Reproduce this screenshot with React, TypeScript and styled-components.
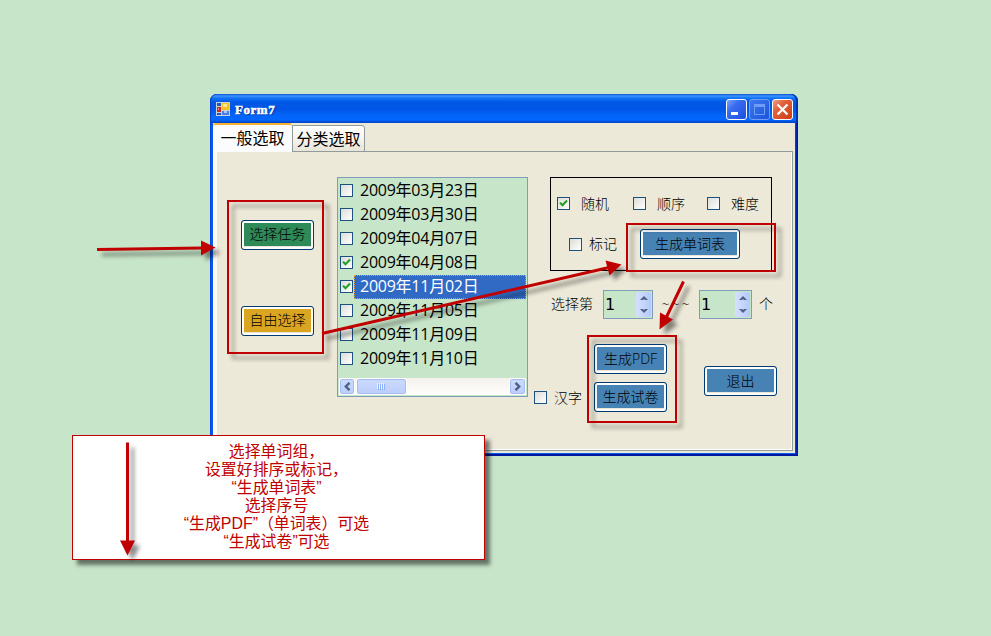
import React from "react";
import styled, { createGlobalStyle, css } from "styled-components";

const UI_FONT = `"Open Sans", "Noto Sans CJK SC", sans-serif`;
const RED = "#c00000";
const MINT = "#c7e5c9";
const FACE = "#ece9d8";

const GlobalStyle = createGlobalStyle`
  * { box-sizing: border-box; }
  body { margin: 0; background: ${MINT}; font-family: ${UI_FONT}; }
  button { font-family: inherit; }
`;

const Desktop = styled.main`
  position: relative;
  width: 991px;
  height: 636px;
  padding: 94px 0 0 210px;
  overflow: hidden;
  background: ${MINT};
`;

const WindowFrame = styled.section`
  display: flex;
  flex-direction: column;
  width: 588px;
  height: 362px;
  padding: 0 3px 3px;
  border-radius: 7px 7px 0 0;
  background: linear-gradient(90deg, #0a3fd8 0, #0a5cf0 2px, #0a5cf0 585px, #0026b8 586px, #00139a 588px);
  box-shadow: inset 0 -2px 0 #0018a0;
`;

const TitleBar = styled.header`
  display: flex;
  align-items: center;
  flex: none;
  height: 29px;
  margin: 0 -3px;
  padding: 2px 5px 0 6px;
  border-radius: 7px 7px 0 0;
  background: linear-gradient(180deg, #0a4fd0 0, #3d95ff 2px, #1474f5 4px, #0058e6 8px, #0055e5 15px, #0366fb 22px, #0366fd 26px, #0040c0 29px);
  box-shadow: inset 1px 0 0 #0840c8, inset -2px 0 0 #0030b8;
`;

const Title = styled.h1`
  flex: 1;
  margin: 0 0 0 5px;
  color: #fff;
  font: bold 13px/16px "Liberation Serif", serif;
  letter-spacing: 0.55px;
  -webkit-text-stroke: 0.5px #fff;
  text-shadow: 1px 1px 1px #062a80;
`;

const CaptionButtons = styled.div`
  display: flex;
  gap: 2px;
`;

const captionFill = {
  normal: "linear-gradient(135deg, #7aa2fa 0, #3a6cf0 35%, #1c4fe0 100%)",
  disabled: "linear-gradient(135deg, #3f78ee, #1c54d8)",
  close: "linear-gradient(135deg, #f0a088 0, #e2603c 35%, #cc3c10 100%)",
};

const CaptionButton = styled.button<{ $kind: keyof typeof captionFill }>`
  display: grid;
  place-items: center;
  width: 21px;
  height: 21px;
  padding: 0;
  border: 1px solid ${(p) => (p.$kind === "disabled" ? "#6f9cf6" : "#fff")};
  border-radius: 3px;
  background: ${(p) => captionFill[p.$kind]};
`;

const Client = styled.div`
  display: flex;
  flex-direction: column;
  flex: 1;
  padding: 0 2px 2px 0;
  background: ${FACE};
`;

const TabStrip = styled.nav`
  display: flex;
  align-items: flex-end;
  height: 29px;
  flex: none;
  box-shadow: inset 0 -1px 0 #919b9c;
`;

const Tab = styled.button<{ $active?: boolean }>`
  padding: 0;
  color: #000;
  font-size: 16px;
  font-weight: 400;
  white-space: nowrap;
  ${(p) =>
    p.$active
      ? css`
          width: 79px;
          height: 29px;
          padding-bottom: 2px;
          line-height: 24px;
          border: 0;
          border-top: 2px solid #f5b133;
          border-radius: 3px 3px 0 0;
          background: #fcfcfe;
        `
      : css`
          width: 73px;
          height: 27px;
          line-height: 24px;
          border: 1px solid #919b9c;
          border-radius: 0 3px 0 0;
          background: linear-gradient(#fff, #f3f2ea 60%, #e8e5d8);
        `}
`;

const TabPage = styled.div`
  display: grid;
  grid-template-columns: 120px 191px 1fr;
  flex: 1;
  border-left: 4px solid #fbfaf5;
  border-right: 1px solid #919b9c;
  border-bottom: 1px solid #919b9c;
  box-shadow: inset -1px -1px 0 #fff;
`;

const TaskColumn = styled.div`
  display: flex;
  flex-direction: column;
  gap: 56px;
  padding: 68px 0 0 24px;
`;

const PushButton = styled.button<{ $fill?: string; $wide?: boolean; $raised?: boolean }>`
  flex: none;
  width: ${(p) => (p.$wide ? 100 : 73)}px;
  height: 30px;
  padding: 0 0 ${(p) => (p.$raised ? 3 : 0)}px;
  color: #000;
  font-size: 14px;
  font-weight: 300;
  line-height: 22px;
  white-space: nowrap;
  border: 1px solid #003c74;
  border-radius: 3px;
  background: ${(p) => p.$fill ?? "#4682b4"};
  box-shadow: inset 0 0 0 2px #fff, inset 0 -3px 0 #e8e4d8;
`;

const ListBox = styled.div`
  display: flex;
  flex-direction: column;
  height: 220px;
  margin-top: 25px;
  padding: 1px;
  border: 1px solid #7f9db9;
  background: ${MINT};
`;

const ListRow = styled.label`
  display: flex;
  align-items: flex-start;
  height: 24px;
  padding-left: 1px;
`;

const RowCheck = styled.span`
  display: flex;
  padding-top: 5px;
`;

const RowText = styled.span<{ $selected: boolean }>`
  flex: 1;
  height: 24px;
  margin-left: 1px;
  padding-left: 5px;
  font-size: 16px;
  line-height: 20px;
  letter-spacing: -0.25px;
  border: 1px ${(p) => (p.$selected ? "dotted #e0a030" : "solid transparent")};
  color: ${(p) => (p.$selected ? "#fff" : "#000")};
  background: ${(p) => (p.$selected ? "#316ac5" : "transparent")};
`;

const Box = styled.span`
  display: grid;
  place-items: center;
  flex: none;
  width: 13px;
  height: 13px;
  border: 1px solid #1c5180;
  background: linear-gradient(135deg, #dcdcd7, #fff);
`;

const ScrollBar = styled.div`
  display: flex;
  gap: 1px;
  height: 17px;
  margin-top: auto;
  background: linear-gradient(#f3f1ec, #fefefb);
`;

const ScrollPiece = styled.div<{ $w: number; $end?: boolean }>`
  display: grid;
  place-items: center;
  width: ${(p) => p.$w}px;
  height: 17px;
  margin-left: ${(p) => (p.$end ? "auto" : 0)};
  border: 1px solid #fff;
  border-radius: 3px;
  background: linear-gradient(#cbdafe, #bccdf9);
  box-shadow: inset 0 0 0 1px #a6bcf0;
`;

const Options = styled.div`
  display: flex;
  flex-direction: column;
`;

const GroupBox = styled.div`
  display: flex;
  flex-direction: column;
  width: 222px;
  height: 94px;
  margin: 25px 0 0 22px;
  border: 1px solid #000;
`;

const FirstOptions = styled.div`
  display: grid;
  grid-template-columns: 76px 74px 60px;
  align-items: center;
  height: 51px;
  padding-left: 6px;
`;

const SecondOptions = styled.div`
  display: flex;
  align-items: center;
  gap: 23px;
  height: 30px;
  padding-left: 18px;
`;

const CheckLabel = styled.label<{ $gap: number }>`
  display: flex;
  align-items: center;
  gap: ${(p) => p.$gap}px;
  height: 19px;
  font-size: 14px;
  font-weight: 300;
  line-height: 18px;
  white-space: nowrap;
`;

const RangeRow = styled.div`
  display: flex;
  align-items: center;
  height: 29px;
  margin: 19px 0 0 23px;
  font-size: 14px;
  font-weight: 300;
`;

const Caption = styled.span<{ $w: number; $center?: boolean }>`
  width: ${(p) => p.$w}px;
  padding-bottom: 3px;
  text-align: ${(p) => (p.$center ? "center" : "left")};
  white-space: nowrap;
`;

const Tildes = styled(Caption)`
  padding: 0 0 2px 1px;
  letter-spacing: 2px;
`;

const Spin = styled.div<{ $w: number }>`
  display: flex;
  justify-content: space-between;
  width: ${(p) => p.$w}px;
  height: 29px;
  padding: 1px 1px 1px 1px;
  border: 1px solid #7f9db9;
  background: ${MINT};
  font: 16px/25px "DejaVu Sans", sans-serif;
`;

const SpinArrows = styled.div`
  display: grid;
  grid-template-rows: 1fr 1fr;
  place-items: center;
  width: 15px;
  border-radius: 2px;
  background: linear-gradient(90deg, #d5e0ff, #b5c9f8);
`;

const Actions = styled.div`
  display: flex;
  align-items: flex-start;
  margin: 25px 0 0 6px;
`;

const HanziSlot = styled.div`
  width: 60px;
  padding-top: 44px;
`;

const ExportStack = styled.div`
  display: flex;
  flex-direction: column;
  gap: 8px;
`;

const ExitSlot = styled.div`
  margin: 22px 0 0 37px;
`;

const Note = styled.aside`
  position: absolute;
  left: 72px;
  top: 435px;
  width: 413px;
  height: 125px;
  padding: 7px 4px 0 0;
  border: 1px solid ${RED};
  background: #fff;
  color: ${RED};
  font: 400 16px/18px "Liberation Sans", "Noto Sans CJK SC", sans-serif;
  font-kerning: none;
  text-spacing-trim: space-all;
  text-align: center;
  box-shadow: 5px 5px 4px rgba(0, 0, 0, 0.5);
`;

const NoteLine = styled.p`
  height: 18px;
  margin: 0;
  font-size: 15.9px;
  white-space: nowrap;
`;

const Highlight = styled.div<{ $x: number; $y: number; $w: number; $h: number }>`
  position: absolute;
  left: ${(p) => p.$x}px;
  top: ${(p) => p.$y}px;
  width: ${(p) => p.$w}px;
  height: ${(p) => p.$h}px;
  border: 2px solid ${RED};
  filter: drop-shadow(5px 5px 2px rgba(0, 0, 0, 0.4));
  pointer-events: none;
`;

const ArrowLayer = styled.svg`
  position: absolute;
  inset: 0;
  pointer-events: none;
  filter: drop-shadow(5px 5px 2px rgba(0, 0, 0, 0.45));
`;

function Check({ on = false }: { on?: boolean }) {
  return (
    <Box>
      {on && (
        <svg width="9" height="9" viewBox="0 0 9 9">
          <path d="M1 3.6 3.5 6.3 8 1.6" fill="none" stroke="#21a121" strokeWidth="2.1" />
        </svg>
      )}
    </Box>
  );
}

function Chevron({ d }: { d: string }) {
  return (
    <svg width="9" height="9" viewBox="0 0 9 9">
      <path d={d} fill="none" stroke="#4d6185" strokeWidth="2.4" />
    </svg>
  );
}

function NumberField({ width }: { width: number }) {
  return (
    <Spin $w={width}>
      1
      <SpinArrows>
        <svg width="8" height="6" viewBox="0 0 8 6"><path d="M0 5 4 1l4 4H5L4 4 3 5Z" fill="#4d6185" /></svg>
        <svg width="8" height="6" viewBox="0 0 8 6"><path d="M0 1 4 5l4-4H5L4 2 3 1Z" fill="#4d6185" /></svg>
      </SpinArrows>
    </Spin>
  );
}

function FormIcon() {
  return (
    <svg width="14" height="15" viewBox="0 0 14 15">
      <path d="M0 0h14v14H0z" fill="#c9d0dc" />
      <path d="M1 1h4v3H1z" fill="#2458b8" />
      <path d="M6 1h7v7H6z" fill="#f6c024" />
      <path d="M7 2h4v3H7z" fill="#ffe890" />
      <path d="M1 5h4v5H1z" fill="#c8281c" />
      <path d="M2 6h1v2H2z" fill="#f0988c" />
      <path d="M1 11h4v2H1z" fill="#2458b8" />
      <path d="M6 9h7v4H6z" fill="#4c7de0" />
      <path d="M8 9h3v2H8z" fill="#a9c6fa" />
    </svg>
  );
}

const dates = [
  ["2009年03月23日", false],
  ["2009年03月30日", false],
  ["2009年04月07日", false],
  ["2009年04月08日", true],
  ["2009年11月02日", true],
  ["2009年11月05日", false],
  ["2009年11月09日", false],
  ["2009年11月10日", false],
] as const;

const noteLines = [
  "选择单词组，",
  "设置好排序或标记，",
  "“生成单词表”",
  "选择序号",
  "“生成PDF”（单词表）可选",
  "“生成试卷”可选",
];

export default function App() {
  return (
    <>
      <GlobalStyle />
      <Desktop>
        <WindowFrame>
          <TitleBar>
            <FormIcon />
            <Title>Form7</Title>
            <CaptionButtons>
              <CaptionButton $kind="normal" aria-label="minimize">
                <svg width="19" height="19"><path d="M4 12h7v3H4z" fill="#fff" /></svg>
              </CaptionButton>
              <CaptionButton $kind="disabled" aria-label="maximize">
                <svg width="19" height="19">
                  <path d="M4.5 5v9.5h10V5" fill="none" stroke="#6f9cf6" />
                  <path d="M4 4h11v3H4z" fill="#6f9cf6" />
                </svg>
              </CaptionButton>
              <CaptionButton $kind="close" aria-label="close">
                <svg width="19" height="19"><path d="m4.5 4.5 10 10m0-10-10 10" stroke="#fff" strokeWidth="2.2" /></svg>
              </CaptionButton>
            </CaptionButtons>
          </TitleBar>
          <Client>
            <TabStrip>
              <Tab $active>一般选取</Tab>
              <Tab>分类选取</Tab>
            </TabStrip>
            <TabPage>
              <TaskColumn>
                <PushButton $raised $fill="#2e8b57">选择任务</PushButton>
                <PushButton $raised $fill="#daa520">自由选择</PushButton>
              </TaskColumn>
              <ListBox>
                {dates.map(([date, checked], i) => (
                  <ListRow key={date}>
                    <RowCheck><Check on={checked} /></RowCheck>
                    <RowText $selected={i === 4}>{date}</RowText>
                  </ListRow>
                ))}
                <ScrollBar>
                  <ScrollPiece $w={16}><Chevron d="M6.5 0.8 2.8 4.5l3.7 3.7" /></ScrollPiece>
                  <ScrollPiece $w={51}>
                    <svg width="9" height="7">
                      <path d="M.5 0v6m2-6v6m2-6v6m2-6v6" stroke="#eef4fe" />
                      <path d="M1.5 1v6m2-6v6m2-6v6m2-6v6" stroke="#8cb0f8" />
                    </svg>
                  </ScrollPiece>
                  <ScrollPiece $w={17} $end><Chevron d="M2.5 0.8 6.2 4.5 2.5 8.2" /></ScrollPiece>
                </ScrollBar>
              </ListBox>
              <Options>
                <GroupBox>
                  <FirstOptions>
                    <CheckLabel $gap={11}><Check on />随机</CheckLabel>
                    <CheckLabel $gap={11}><Check />顺序</CheckLabel>
                    <CheckLabel $gap={11}><Check />难度</CheckLabel>
                  </FirstOptions>
                  <SecondOptions>
                    <CheckLabel $gap={7}><Check />标记</CheckLabel>
                    <PushButton $wide>生成单词表</PushButton>
                  </SecondOptions>
                </GroupBox>
                <RangeRow>
                  <Caption $w={52}>选择第</Caption>
                  <NumberField width={50} />
                  <Tildes $w={46} $center>~~~</Tildes>
                  <NumberField width={53} />
                  <Caption $w={28} $center>个</Caption>
                </RangeRow>
                <Actions>
                  <HanziSlot>
                    <CheckLabel $gap={7}><Check />汉字</CheckLabel>
                  </HanziSlot>
                  <ExportStack>
                    <PushButton>生成PDF</PushButton>
                    <PushButton>生成试卷</PushButton>
                  </ExportStack>
                  <ExitSlot>
                    <PushButton>退出</PushButton>
                  </ExitSlot>
                </Actions>
              </Options>
            </TabPage>
          </Client>
        </WindowFrame>

        <Note>
          {noteLines.map((line) => (
            <NoteLine key={line}>{line}</NoteLine>
          ))}
        </Note>

        <Highlight $x={227} $y={200} $w={97} $h={154} />
        <Highlight $x={626} $y={223} $w={150} $h={49} />
        <Highlight $x={587} $y={335} $w={90} $h={88} />
        <ArrowLayer width="991" height="636" viewBox="0 0 991 636">
          <g stroke={RED} strokeWidth="3">
            <path d="M97 249.5 202 248" />
            <path d="M322 333.5 609 267.5" />
            <path d="M683.5 281.5 666 318" />
            <path d="M127.5 442.5V542" />
          </g>
          <g fill={RED}>
            <path d="M201 240.5 215.5 247.5 201 255.5Z" />
            <path d="M605.5 260.5 621.5 264.5 609.5 275.5Z" />
            <path d="M660 312.5 673 319.5 659.5 329.5Z" />
            <path d="M120 540.5H135L127.5 555.5Z" />
          </g>
        </ArrowLayer>
      </Desktop>
    </>
  );
}
